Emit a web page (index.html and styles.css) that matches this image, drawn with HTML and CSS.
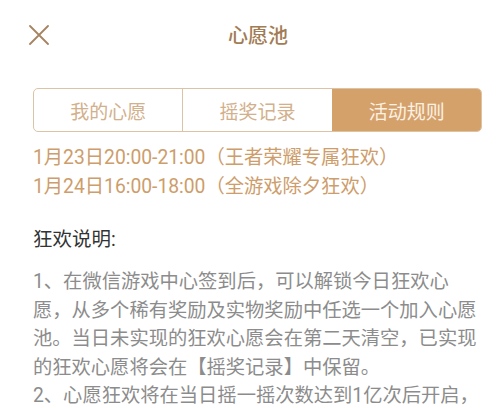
FILE: index.html
```html
<!DOCTYPE html>
<html lang="zh-CN">
<head>
<meta charset="utf-8">
<link rel="stylesheet" href="styles.css">
</head>
<body>
<div class="page">
  <header class="header">
    <span class="close" aria-label="关闭">
      <svg width="20" height="20" viewBox="0 0 20 20"><path d="M1 1 L19 19 M19 1 L1 19" stroke="#a58462" stroke-width="1.8" fill="none" stroke-linecap="round"/></svg>
    </span>
    <h1 class="title">心愿池</h1>
  </header>
  <main class="content">
    <nav class="tabs">
      <div class="tab">我的心愿</div>
      <div class="tab">摇奖记录</div>
      <div class="tab active">活动规则</div>
    </nav>
    <div class="dates">
      <p>1月23日20:00-21:00（王者荣耀专属狂欢）</p>
      <p>1月24日16:00-18:00（全游戏除夕狂欢）</p>
    </div>
    <h2 class="heading">狂欢说明:</h2>
    <div class="rules">
      <p>1、在微信游戏中心签到后，可以解锁今日狂欢心愿，从多个稀有奖励及实物奖励中任选一个加入心愿池。当日未实现的狂欢心愿会在第二天清空，已实现的狂欢心愿将会在【摇奖记录】中保留。</p>
      <p>2、心愿狂欢将在当日摇一摇次数达到1亿次后开启，</p>
    </div>
  </main>
</div>
</body>
</html>
```
FILE: styles.css
```css
* { box-sizing: border-box; }
html, body {
  margin: 0;
  padding: 0;
  background: #ffffff;
}
body {
  font-family: Roboto, "Noto Sans CJK SC", sans-serif;
  width: 500px;
  height: 408px;
  overflow: hidden;
  text-spacing-trim: space-all;
}
.page {
  width: 500px;
}
.header {
  position: relative;
  height: 68px;
  display: flex;
  align-items: center;
  justify-content: center;
}
.close {
  position: absolute;
  left: 29px;
  top: 25px;
  width: 20px;
  height: 20px;
  display: block;
}
.close svg { display: block; }
.title {
  margin: 0;
  font-size: 20px;
  font-weight: 500;
  color: #a27c55;
  padding-left: 16px;
}
.content {
  padding: 20px 18px 0 33px;
}
.tabs {
  display: flex;
  height: 44px;
  border: 1px solid #dcc3a4;
  border-radius: 5px;
  overflow: hidden;
}
.tab {
  flex: 1;
  display: flex;
  align-items: center;
  justify-content: center;
  font-size: 19px;
  color: #d2b08c;
  border-left: 1px solid #dcc3a4;
}
.tab:first-child { border-left: none; }
.tab.active {
  background: #d5a16b;
  color: #fcf1e4;
  border-left-color: #d5a16b;
}
.dates {
  margin-top: 11px;
  color: #cd9d6b;
  font-size: 19.3px;
  line-height: 29px;
}
.dates p { margin: 0; }
.heading {
  margin: 24px 0 0;
  font-size: 19.5px;
  font-weight: 400;
  line-height: 29px;
  color: #333333;
}
.rules {
  margin-top: 14px;
  font-size: 19.3px;
  line-height: 28.6px;
  color: #8c8c8c;
}
.rules p { margin: 0; }
```
